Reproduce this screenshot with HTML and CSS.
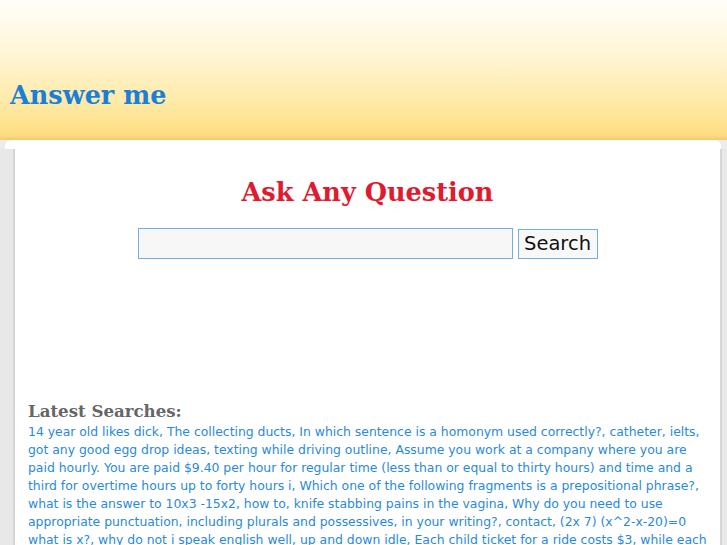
FILE: index.html
```
<!DOCTYPE html>
<html>
<head>
<meta charset="utf-8">
<title>Answer me</title>
<link rel="stylesheet" href="styles.css">
</head>
<body>
<div class="header">
  <h1 class="logo">Answer me</h1>
</div>
<div class="cap-row">
  <div class="cap"></div>
</div>
<div class="page">
  <div class="gutter-left"></div>
  <div class="content">
    <h2 class="ask">Ask Any Question</h2>
    <form class="search">
      <input class="search-input" type="text">
      <button class="search-btn" type="button">Search</button>
    </form>
    <div class="ad-space"></div>
    <h3 class="latest-title">Latest Searches:</h3>
    <p class="latest">
      <a href="#">14 year old likes dick</a>, <a href="#">The collecting ducts</a>, <a href="#">In which sentence is a homonym used correctly?</a>, <a href="#">catheter</a>, <a href="#">ielts</a>, <a href="#">got any good egg drop ideas</a>, <a href="#">texting while driving outline</a>, <a href="#">Assume you work at a company where you are paid hourly. You are paid $9.40 per hour for regular time (less than or equal to thirty hours) and time and a third for overtime hours up to forty hours i</a>, <a href="#">Which one of the following fragments is a prepositional phrase?</a>, <a href="#">what is the answer to 10x3 -15x2</a>, <a href="#">how to</a>, <a href="#">knife stabbing pains in the vagina</a>, <a href="#">Why do you need to use appropriate punctuation, including plurals and possessives, in your writing?</a>, <a href="#">contact</a>, <a href="#">(2x 7) (x^2-x-20)=0 what is x?</a>, <a href="#">why do not i speak english well</a>, <a href="#">up and down idle</a>, <a href="#">Each child ticket for a ride costs $3, while each adult ticket costs $5. If the total ticket sales were $150</a>
    </p>
  </div>
  <div class="gutter-right"></div>
</div>
</body>
</html>
```
FILE: styles.css
```
html, body {
  margin: 0;
  padding: 0;
}
body {
  background: #ececec;
  font-family: "DejaVu Sans", Verdana, sans-serif;
  overflow: hidden;
}
.header {
  height: 141px;
  background: linear-gradient(to bottom, #fffefa 0%, #fff5d4 40%, #fee79c 80%, #fddc80 96%, #e9c873 100%);
  display: flex;
  align-items: flex-start;
}
.logo {
  margin: 80px 0 0 10px;
  font-family: "DejaVu Serif", serif;
  font-weight: bold;
  font-size: 25.5px;
  line-height: 30px;
  color: #1a7fd8;
}
.cap-row {
  background: #ececec;
  padding: 0 6px 0 5px;
  margin-top: -1px;
}
.cap {
  height: 9px;
  background: #fff;
  border-radius: 6px 6px 0 0;
}
.page {
  display: flex;
  min-height: 500px;
}
.gutter-left {
  width: 13px;
  flex: none;
  background: #e8e8e8;
  border-right: 2px solid #d6d6d6;
}
.gutter-right {
  width: 5px;
  flex: none;
  background: #e8e8e8;
  border-left: 2px solid #d6d6d6;
}
.content {
  flex: 1;
  background: #fff;
  padding: 0 13px;
}
.ask {
  margin: 27px 0 0 0;
  text-align: center;
  font-family: "DejaVu Serif", serif;
  font-weight: bold;
  font-size: 25.6px;
  line-height: 32px;
  color: #e01b2f;
}
.search {
  display: flex;
  justify-content: center;
  align-items: center;
  gap: 5px;
  margin-top: 20px;
}
.search-input {
  width: 373px;
  height: 29px;
  margin: 0;
  padding: 0;
  border: 1px solid #6fb0e2;
  background: #f7f7f7;
}
.search-btn {
  height: 30px;
  margin: 0;
  padding: 0 5.5px;
  border: 1px solid #6fb0e2;
  background: #f8f8f8;
  font-family: "DejaVu Sans", sans-serif;
  font-size: 19.5px;
  color: #111;
}
.ad-space {
  height: 142px;
}
.latest-title {
  margin: 0;
  font-family: "DejaVu Serif", serif;
  font-weight: bold;
  font-size: 16.6px;
  line-height: 20px;
  color: #666;
}
.latest {
  margin: 2px 0 0 0;
  font-size: 12.4px;
  line-height: 18px;
  color: #2a8ad8;
}
.latest a {
  color: #2a8ad8;
  text-decoration: none;
}
```
